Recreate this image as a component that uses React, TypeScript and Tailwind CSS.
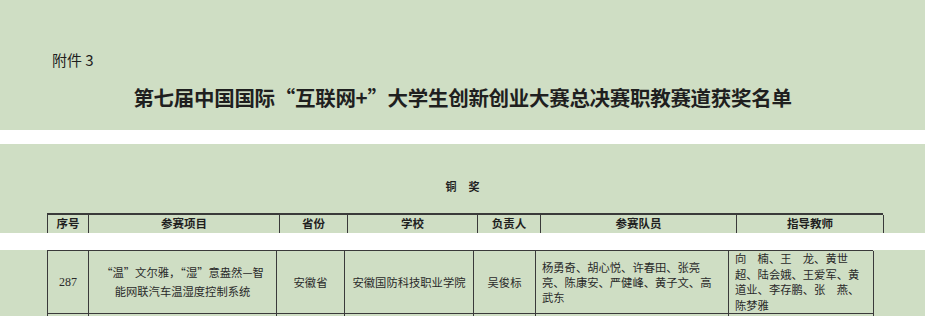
const sans = "font-['Noto_Sans_CJK_SC','Noto_Sans',sans-serif]"

const headCols = 'grid-cols-[41px_191px_68px_130px_63px_196px_147px]'
const rowCols = 'grid-cols-[41px_188px_68px_129px_62px_193px_145px]'

const headers = ['序号', '参赛项目', '省份', '学校', '负责人', '参赛队员', '指导教师']

export default function App() {
  return (
    <div className={`w-[925px] h-[316px] overflow-hidden bg-white text-[#1f1f1f] ${sans}`}>
      {/* page title band */}
      <section className="h-[130px] bg-[#cfdec4] pt-[50px]">
        <p className="pl-[52px] text-[15px] leading-[20px]">附件 3</p>
        <h1 className="mt-[13px] text-center text-[20.5px] font-bold leading-[28px] tracking-[-0.3px]">
          第七届中国国际“互联网+”大学生创新创业大赛总决赛职教赛道获奖名单
        </h1>
      </section>

      <div className="h-[14px]" />

      {/* award heading + column headers */}
      <section className="h-[89px] overflow-hidden bg-[#cfdec4] pt-[34px]">
        <div className="flex justify-center gap-[12px] text-[11px] font-bold leading-[16px]">
          <span>铜</span>
          <span>奖</span>
        </div>
        <div className={`ml-[47px] mt-[19px] grid w-[836px] ${headCols} border-l border-t-2 border-[#3a3a3a]`}>
          {headers.map(h => (
            <div
              key={h}
              className="flex h-[19px] items-center justify-center border-r border-b border-[#3a3a3a] text-[11.5px] font-bold"
            >
              {h}
            </div>
          ))}
          {headers.map(h => (
            <div key={'e' + h} className="h-[20px] border-r border-[#3a3a3a]" />
          ))}
        </div>
      </section>

      <div className="h-[17px]" />

      {/* first bronze row */}
      <section className="h-[66px] overflow-hidden bg-[#cfdec4]">
        <div className={`ml-[47px] grid w-[826px] ${rowCols} border-l border-t border-[#3a3a3a] text-[11.3px] text-[#2a2a2a]`}>
          <div className="flex h-[63px] items-center justify-center border-r border-b border-[#3a3a3a] font-['Liberation_Serif',serif] text-[12px]">
            287
          </div>
          <div className="flex h-[63px] flex-col items-center justify-center border-r border-b border-[#3a3a3a] leading-[19px]">
            <span>“温”文尔雅，“湿”意盎然—智</span>
            <span>能网联汽车温湿度控制系统</span>
          </div>
          <div className="flex h-[63px] items-center justify-center border-r border-b border-[#3a3a3a]">安徽省</div>
          <div className="flex h-[63px] items-center justify-center border-r border-b border-[#3a3a3a]">安徽国防科技职业学院</div>
          <div className="flex h-[63px] items-center justify-center border-r border-b border-[#3a3a3a]">吴俊标</div>
          <div className="flex h-[63px] flex-col justify-center border-r border-b border-[#3a3a3a] pl-[6px] leading-[15px]">
            <span>杨勇奇、胡心悦、许春田、张亮</span>
            <span>亮、陈康安、严健峰、黄子文、高</span>
            <span>武东</span>
          </div>
          <div className="flex h-[63px] flex-col justify-center border-r border-b border-[#3a3a3a] pl-[6px] leading-[15.5px]">
            <span>向　楠、王　龙、黄世</span>
            <span>超、陆会娥、王爱军、黄</span>
            <span>道业、李存鹏、张　燕、</span>
            <span>陈梦雅</span>
          </div>
          {headers.map(h => (
            <div key={'n' + h} className="h-[20px] border-r border-[#3a3a3a]" />
          ))}
        </div>
      </section>
    </div>
  )
}
